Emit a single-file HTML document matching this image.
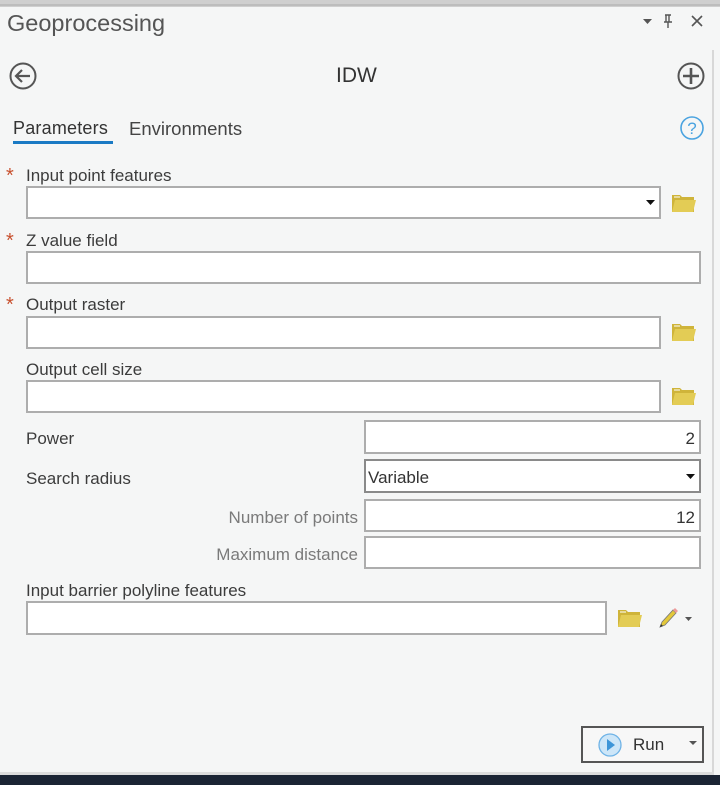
<!DOCTYPE html>
<html><head><style>
*{margin:0;padding:0;box-sizing:border-box}
body{width:720px;height:785px;background:#f5f6f6;position:relative;overflow:hidden;font-family:"Liberation Sans",sans-serif;color:#333}
.a{position:absolute}
.box{position:absolute;background:#fff;border:2px solid #adadad}
.lbl{position:absolute;font-size:17px;color:#3c3c3c}
.star{position:absolute;color:#c8502e;font-size:20px;left:6px}
.r{text-align:right}
</style></head><body>
<div class="a" style="left:0;top:0;width:720px;height:7px;background:#cfcfcf"></div>
<div class="a" style="left:0;top:4px;width:720px;height:2px;background:#bdbdbd"></div>
<div class="a" style="left:712px;top:50px;width:2px;height:723px;background:#d8d8d8"></div>
<div class="a" style="left:0;top:775px;width:720px;height:10px;background:#1b2434"></div>
<div class="a" style="left:0;top:772px;width:714px;height:3px;background:#dcdcdc"></div>
<div class="a" style="left:7px;top:10px;font-size:23.5px;color:#555">Geoprocessing</div>
<svg class="a" style="left:640px;top:12px" width="70" height="20"><path d="M3 7h9l-4.5 5z" fill="#555"/><path d="M26 3v7M29 3v7M24 10h8M28 10v6M25 3h6" stroke="#555" stroke-width="1.4" fill="none"/><path d="M52 4l10 10M62 4l-10 10" stroke="#555" stroke-width="1.6"/></svg>
<svg class="a" style="left:8px;top:61px" width="30" height="30"><circle cx="15" cy="15" r="12.5" fill="none" stroke="#555" stroke-width="2"/><path d="M22 15H9M14 9l-6 6 6 6" fill="none" stroke="#555" stroke-width="2.2"/></svg>
<div class="a" style="left:336px;top:64px;font-size:21px;color:#333">IDW</div>
<svg class="a" style="left:676px;top:61px" width="30" height="30"><circle cx="15" cy="15" r="12.5" fill="none" stroke="#555" stroke-width="2"/><path d="M15 7v16M7 15h16" stroke="#555" stroke-width="2.6"/></svg>
<div class="a" style="left:13px;top:118px;font-size:18px;color:#333;letter-spacing:0.2px">Parameters</div>
<div class="a" style="left:13px;top:141px;width:100px;height:3px;background:#1a7ac4"></div>
<div class="a" style="left:129px;top:118px;font-size:18.5px;color:#444">Environments</div>
<svg class="a" style="left:679px;top:115px" width="26" height="26"><circle cx="13" cy="13" r="11" fill="none" stroke="#4aa3e0" stroke-width="1.6"/><text x="13" y="19" font-size="17" text-anchor="middle" fill="#4aa3e0" font-family="Liberation Sans">?</text></svg>

<div class="star" style="top:165px">*</div><div class="lbl" style="left:26px;top:166px">Input point features</div>
<div class="box" style="left:26px;top:186px;width:635px;height:33px"></div>
<svg class="a" style="left:646px;top:199px" width="10" height="8"><path d="M0 1h9l-4.5 5z" fill="#111"/></svg>
<div class="star" style="top:230px">*</div><div class="lbl" style="left:26px;top:231px">Z value field</div>
<div class="box" style="left:26px;top:251px;width:675px;height:33px"></div>
<div class="star" style="top:294px">*</div><div class="lbl" style="left:26px;top:295px">Output raster</div>
<div class="box" style="left:26px;top:316px;width:635px;height:33px"></div>
<div class="lbl" style="left:26px;top:360px">Output cell size</div>
<div class="box" style="left:26px;top:380px;width:635px;height:33px"></div>
<div class="lbl" style="left:26px;top:429px">Power</div>
<div class="box r" style="left:364px;top:420px;width:337px;height:34px;font-size:17px;padding:7px 4px 0 0">2</div>
<div class="lbl" style="left:26px;top:469px">Search radius</div>
<div class="box" style="left:364px;top:459px;width:337px;height:34px;font-size:17px;padding:7px 0 0 2px;border-color:#8a8a8a">Variable</div>
<svg class="a" style="left:686px;top:473px" width="10" height="8"><path d="M0 1h9l-4.5 5z" fill="#111"/></svg>
<div class="lbl r" style="left:130px;width:228px;top:508px;color:#7a7a7a">Number of points</div>
<div class="box r" style="left:364px;top:499px;width:337px;height:33px;font-size:17px;padding:7px 4px 0 0">12</div>
<div class="lbl r" style="left:130px;width:228px;top:545px;color:#7a7a7a">Maximum distance</div>
<div class="box" style="left:364px;top:536px;width:337px;height:33px"></div>
<div class="lbl" style="left:26px;top:581px">Input barrier polyline features</div>
<div class="box" style="left:26px;top:601px;width:581px;height:34px"></div>

<svg width="0" height="0" style="position:absolute"><defs><g id="f"><path d="M1 3h8l2 2h12v15H1z" fill="#cfb43a"/><path d="M4 8h21l-3 12H1z" fill="#e3cc55"/><path d="M3 5h6" stroke="#fff" stroke-width="1"/></g></defs></svg>
<svg class="a" style="left:671px;top:192px" width="26" height="22"><use href="#f"/></svg>
<svg class="a" style="left:671px;top:321px" width="26" height="22"><use href="#f"/></svg>
<svg class="a" style="left:671px;top:385px" width="26" height="22"><use href="#f"/></svg>
<svg class="a" style="left:617px;top:607px" width="26" height="22"><use href="#f"/></svg>
<svg class="a" style="left:657px;top:607px" width="40" height="24"><path d="M3 20l2-5 11-12 3 3-11 12z" fill="#e3c83a" stroke="#777" stroke-width="0.8"/><path d="M16 3l2-2 3 3-2 2z" fill="#e99"/><path d="M3 20l1-3 2 2z" fill="#333"/><path d="M28 10h7l-3.5 4z" fill="#555"/></svg>

<div class="a" style="left:581px;top:726px;width:123px;height:37px;border:2px solid #555;background:#f7f7f7"></div>
<svg class="a" style="left:597px;top:732px" width="26" height="26"><circle cx="13" cy="13" r="11" fill="#cde6f8" stroke="#6fb3e6" stroke-width="1.3"/><path d="M10 7l8 6-8 6z" fill="#3d95d8"/></svg>
<div class="a" style="left:633px;top:735px;font-size:17px;color:#333">Run</div>
<svg class="a" style="left:689px;top:740px" width="10" height="8"><path d="M0 1h8l-4 4z" fill="#555"/></svg>
</body></html>
